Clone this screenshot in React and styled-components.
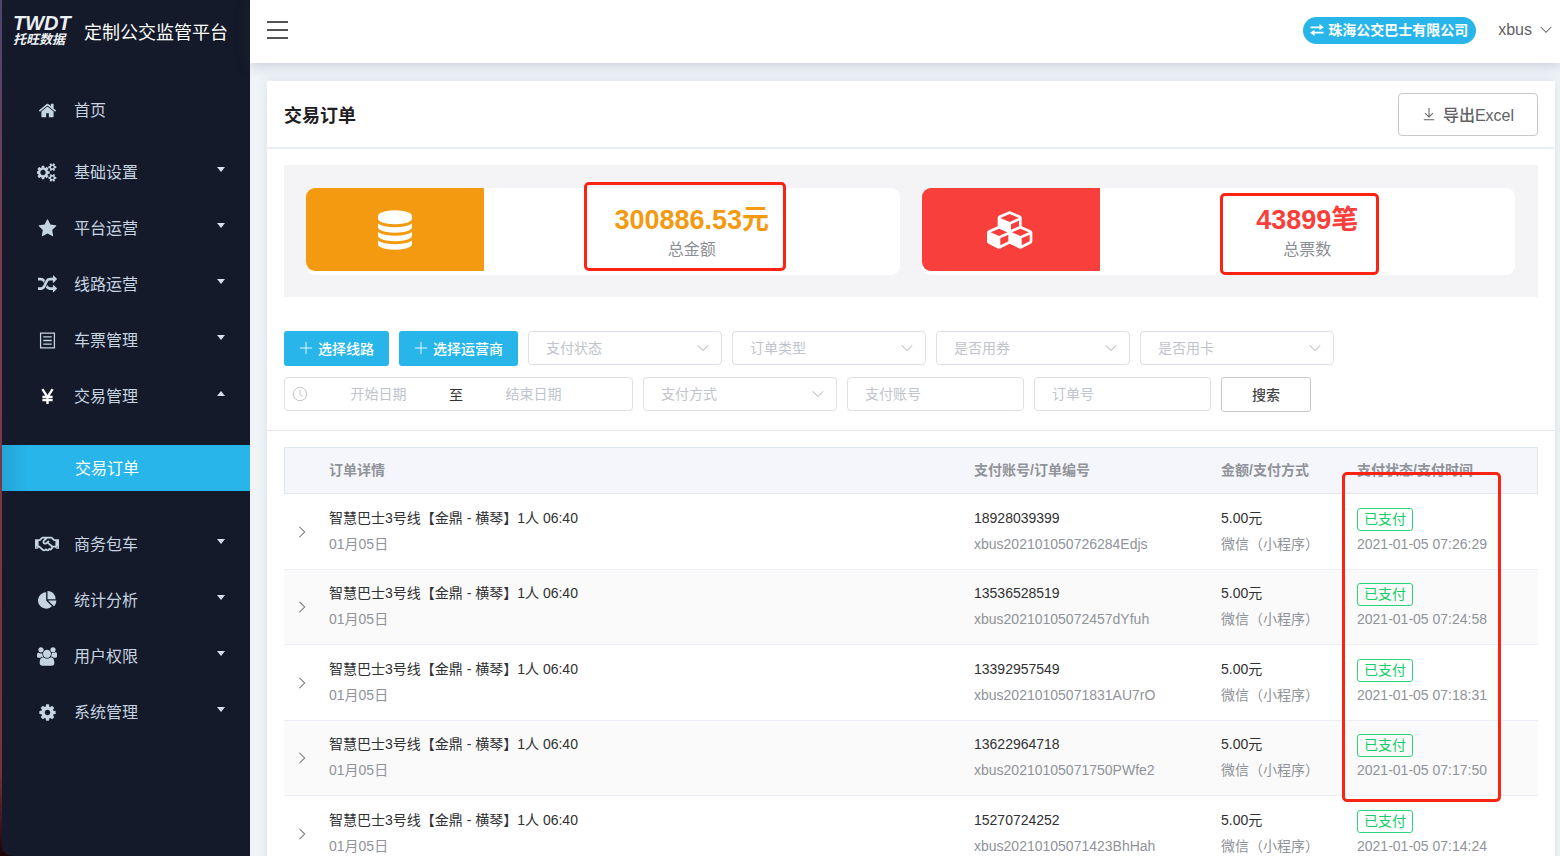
import React, { useState } from 'react';
import styled, { createGlobalStyle } from 'styled-components';
import { FaRegHandshake } from 'react-icons/fa';

const GlobalStyle = createGlobalStyle`
* {
  box-sizing: border-box;
}
body {
  margin: 0;
  background: #f0f4f8;
  color: #303133;
  font-family: "Liberation Sans", "Noto Sans CJK SC", sans-serif;
  font-size: 14px;
}
button, input, select {
  font-family: inherit;
  font-size: 14px;
}
`;

/* Shell */
const Shell = styled.div`
  display: flex;
  height: 100vh;
  overflow: hidden;
`;

const Sidebar = styled.aside`
  flex: none;
  width: 250px;
  padding-left: 2px;
  background: linear-gradient(#4d4470, #7b3c4c 30%, #7b3040 90%, #1a0508);
`;

const SidebarInner = styled.div`
  height: 100%;
  background: #141a29;
  border-bottom-left-radius: 10px;
  overflow: hidden;
`;

const Brand = styled.div`
  display: flex;
  align-items: center;
  gap: 12px;
  height: 63px;
  padding: 0 0 2px 11px;
  color: #fff;
`;

const Logo = styled.div`
  width: 59px;
  font-weight: bold;
  font-style: italic;
  white-space: nowrap;
  color: #eceff3;
`;

const LogoName = styled.div`
  font-size: 20px;
  line-height: 19px;
`;

const LogoSub = styled.div`
  font-size: 13px;
  line-height: 14px;
`;

const BrandTitle = styled.h1`
  margin: 0;
  font-size: 18px;
  font-weight: normal;
  white-space: nowrap;
`;

const Nav = styled.nav`
  padding-top: 19px;
`;

const NavItem = styled.button`
  display: flex;
  align-items: center;
  width: 100%;
  height: 56px;
  margin-bottom: ${(props) => (props.$spaced ? '6px' : '0')};
  padding: 0 25px 0 32px;
  border: none;
  background: none;
  color: #c6d3e1;
  font-size: 16px;
  text-align: left;
  cursor: pointer;
`;

const NavIcon = styled.span`
  display: flex;
  justify-content: center;
  width: 26px;
  margin-right: 14px;
  color: ${(props) => (props.$bright ? '#fff' : 'inherit')};
`;

const NavText = styled.span`
  flex: 1;
  padding-bottom: 2px;
`;

const Caret = styled.span`
  margin-bottom: 5px;
  border-left: 4px solid transparent;
  border-right: 4px solid transparent;
  border-top: ${(props) => (props.$open ? 'none' : '5px solid #d5dfe9')};
  border-bottom: ${(props) => (props.$open ? '5px solid #d5dfe9' : 'none')};
`;

const SubMenu = styled.div`
  padding: 21px 0 25px;
`;

const SubLink = styled.a`
  display: flex;
  align-items: center;
  height: 46px;
  padding: 0 0 2px 73px;
  background: linear-gradient(90deg, #22a5d6, #28b6ea 28px);
  color: #fff;
  font-size: 16px;
  text-decoration: none;
`;

/* Right side */
const Content = styled.div`
  flex: 1;
  min-width: 0;
  display: flex;
  flex-direction: column;
`;

const TopBar = styled.header`
  flex: none;
  display: flex;
  align-items: center;
  height: 63px;
  padding: 0 8px 3px 17px;
  background: #fff;
  box-shadow: 0 1px 14px rgba(40, 60, 80, 0.25);
  z-index: 1;
`;

const MenuButton = styled.button`
  display: flex;
  flex-direction: column;
  gap: 6px;
  width: 21px;
  margin-right: auto;
  padding: 0;
  border: none;
  background: none;
  cursor: pointer;

  span {
    height: 2px;
    background: #555;
  }
`;

const CompanyButton = styled.button`
  display: flex;
  align-items: center;
  gap: 4px;
  height: 27px;
  margin-right: 22px;
  padding: 0 8px 3px 7px;
  border: none;
  border-radius: 14px;
  background: #28b6ea;
  color: #fff;
  font-weight: bold;
  cursor: pointer;

  svg {
    margin-top: 2px;
  }
`;

const UserButton = styled.button`
  display: flex;
  align-items: center;
  gap: 8px;
  padding: 0;
  border: none;
  background: none;
  color: #5f6266;
  font-size: 16px;
  cursor: pointer;
`;

const Scroll = styled.main`
  flex: 1;
  overflow-y: auto;
  padding: 18px 5px 18px 17px;
  scrollbar-width: none;
`;

const Card = styled.section`
  background: #fff;
  box-shadow: 0 0 10px rgba(60, 90, 120, 0.12);
`;

const CardHead = styled.div`
  display: flex;
  align-items: center;
  justify-content: space-between;
  height: 68px;
  padding: 0 17px;
  border-bottom: 2px solid #ebeef5;
`;

const Title = styled.h2`
  margin: 0;
  color: #1f2023;
  font-size: 18px;
`;

const ExportButton = styled.button`
  display: flex;
  align-items: center;
  justify-content: center;
  gap: 7px;
  width: 140px;
  height: 43px;
  border: 1px solid #c8c9cc;
  border-radius: 4px;
  background: #fff;
  color: #606266;
  font-size: 16px;
  font-weight: 500;
  cursor: pointer;
`;

const Stats = styled.div`
  display: flex;
  gap: 22px;
  margin: 16px 17px 34px;
  padding: 23px 23px 22px 22px;
  background: #f4f4f7;
`;

const Stat = styled.div`
  flex: 1;
  display: flex;
  height: 87px;
  border-radius: 9px;
  background: #fff;
`;

const StatIcon = styled.div`
  display: flex;
  align-items: center;
  justify-content: center;
  width: 30%;
  height: 83px;
  border-radius: 9px 0 0 9px;
  background: ${(props) => props.$color};
  color: #fff;
`;

const StatBody = styled.div`
  position: relative;
  flex: 1;
  padding-top: 15px;
  text-align: center;
`;

const StatValue = styled.div`
  color: ${(props) => props.$color};
  font-size: 27px;
  font-weight: bold;
  line-height: 34px;
`;

const StatLabel = styled.div`
  color: #8a8d93;
  font-size: 16px;
  line-height: 26px;
`;

const Marker = styled.div`
  position: absolute;
  top: ${(props) => props.$top}px;
  left: ${(props) => (props.$left ? `${props.$left}px` : 'auto')};
  right: ${(props) => (props.$right ? `${props.$right}px` : 'auto')};
  width: ${(props) => props.$width}px;
  height: ${(props) => props.$height}px;
  border: 3px solid #fd2313;
  border-radius: 5px;
  pointer-events: none;
`;

const Filters = styled.form`
  display: flex;
  flex-direction: column;
  gap: 11px;
  padding: 0 17px 18px;
  border-bottom: 1px solid #e4e7ed;
`;

const FilterRow = styled.div`
  display: flex;
  gap: 10px;
  height: 35px;
`;

const PickButton = styled.button`
  display: flex;
  align-items: center;
  gap: 5px;
  height: 35px;
  padding: 0 15px 2px;
  border: none;
  border-radius: 3px;
  background: #28b6ea;
  color: #fff;
  font-weight: 500;
  white-space: nowrap;
  cursor: pointer;
`;

const SelectBox = styled.div`
  display: grid;
  align-items: center;
  width: 194px;
  height: 34px;

  select, svg {
    grid-area: 1 / 1;
  }
  svg {
    justify-self: end;
    margin-right: 12px;
    color: #c0c4cc;
    pointer-events: none;
  }
`;

const Select = styled.select`
  width: 100%;
  height: 34px;
  padding: 0 30px 0 17px;
  border: 1px solid #dcdfe6;
  border-radius: 4px;
  background: #fff;
  color: #c0c4cc;
  appearance: none;
`;

const TextInput = styled.input`
  width: 177px;
  height: 34px;
  padding: 0 17px;
  border: 1px solid #dcdfe6;
  border-radius: 4px;

  &::placeholder {
    color: #c0c4cc;
  }
`;

const DateRange = styled.div`
  display: flex;
  align-items: center;
  width: 349px;
  height: 34px;
  padding: 0 28px 0 7px;
  border: 1px solid #dcdfe6;
  border-radius: 4px;
  color: #303133;

  svg {
    color: #c0c4cc;
  }
`;

const DateInput = styled.input`
  flex: 1;
  min-width: 0;
  padding: 0;
  border: none;
  text-align: center;

  &::placeholder {
    color: #c0c4cc;
  }
`;

const SearchButton = styled.button`
  width: 90px;
  height: 35px;
  padding: 0 0 2px;
  border: 1px solid #c8c9cc;
  border-radius: 3px;
  background: #fff;
  color: #444649;
  font-weight: 500;
  cursor: pointer;
`;

const TableWrap = styled.div`
  position: relative;
  padding: 16px 17px;
`;

const Table = styled.table`
  width: 100%;
  table-layout: fixed;
  border-spacing: 0;

  th {
    height: 47px;
    padding: 0 10px 3px;
    border: solid #dfe6ec;
    border-width: 1px 0;
    background: #f4f6fb;
    color: #909399;
    text-align: left;
  }
  th:first-child {
    border-left-width: 1px;
  }
  th:last-child {
    border-right-width: 1px;
  }
  td {
    height: 76px;
    padding: 0 10px 2px;
    border-bottom: 1px solid #ebeef5;
    line-height: 26px;
    white-space: nowrap;
  }
  td:first-child {
    padding: 0 8px;
  }
  tr:nth-child(even) td {
    height: 75px;
    background: #fafafa;
  }
`;

const Col = styled.col`
  width: ${(props) => props.$width};
`;

const Minor = styled.div`
  color: #909399;
`;

const StatusLine = styled.div`
  display: flex;
  align-items: flex-end;
  height: 26px;
`;

const Tag = styled.span`
  height: 23px;
  padding: 0 6px;
  border: 1px solid #2bd67b;
  border-radius: 3px;
  color: #13ce66;
  line-height: 21px;
`;

const ExpandButton = styled.button`
  display: flex;
  padding: 0 3px;
  border: none;
  background: none;
  color: #6c6f75;
  cursor: pointer;
`;

const paths = {
  home: 'M1472 992v480q0 26-19 45t-45 19h-384v-384h-256v384h-384q-26 0-45-19t-19-45v-480q0-1 .5-3t.5-3l575-474 575 474q1 2 1 6zm223-69l-62 74q-8 9-21 11h-3q-13 0-21-7l-692-577-692 577q-12 8-24 7-13-2-21-11l-62-74q-8-10-7-23.5t11-21.5l719-599q32-26 76-26t76 26l244 204v-195q0-14 9-23t23-9h192q14 0 23 9t9 23v408l219 182q10 8 11 21.5t-7 23.5z',
  cogs: 'M832 896q0-106-75-181t-181-75-181 75-75 181 75 181 181 75 181-75 75-181zm768 512q0-52-38-90t-90-38-90 38-38 90q0 53 37.5 90.5t90.5 37.5 90.5-37.5 37.5-90.5zm0-1024q0-52-38-90t-90-38-90 38-38 90q0 53 37.5 90.5t90.5 37.5 90.5-37.5 37.5-90.5zm-384 421v185q0 10-7 19.5t-16 10.5l-155 24q-11 35-32 76 34 48 90 115 7 11 7 20 0 12-7 19-23 30-82.5 89.5t-78.5 59.5q-11 0-21-7l-115-90q-37 19-77 31-11 108-23 155-7 24-30 24h-186q-11 0-20-7.5t-10-17.5l-23-153q-34-10-75-31l-118 89q-7 7-20 7-11 0-21-8-144-133-144-160 0-9 7-19 10-14 41-53t47-61q-23-44-35-82l-152-24q-10-1-17-9.5t-7-19.5v-185q0-10 7-19.5t16-10.5l155-24q11-35 32-76-34-48-90-115-7-11-7-20 0-12 7-20 22-30 82-89t79-59q11 0 21 7l115 90q34-18 77-32 11-108 23-154 7-24 30-24h186q11 0 20 7.5t10 17.5l23 153q34 10 75 31l118-89q8-7 20-7 11 0 21 8 144 133 144 160 0 8-7 19-12 16-42 54t-45 60q23 48 34 82l152 23q10 2 17 10.5t7 19.5zm640 533v140q0 16-149 31-12 27-30 52 51 113 51 138 0 4-4 7-122 71-124 71-8 0-46-47t-52-68q-20 2-30 2t-30-2q-14 21-52 68t-46 47q-2 0-124-71-4-3-4-7 0-25 51-138-18-25-30-52-149-15-149-31v-140q0-16 149-31 13-29 30-52-51-113-51-138 0-4 4-7 4-2 35-20t59-34 30-16q8 0 46 46.5t52 67.5q20-2 30-2t30 2q51-71 92-112l6-2q4 0 124 70 4 3 4 7 0 25-51 138 17 23 30 52 149 15 149 31zm0-1024v140q0 16-149 31-12 27-30 52 51 113 51 138 0 4-4 7-122 71-124 71-8 0-46-47t-52-68q-20 2-30 2t-30-2q-14 21-52 68t-46 47q-2 0-124-71-4-3-4-7 0-25 51-138-18-25-30-52-149-15-149-31v-140q0-16 149-31 13-29 30-52-51-113-51-138 0-4 4-7 4-2 35-20t59-34 30-16q8 0 46 46.5t52 67.5q20-2 30-2t30 2q51-71 92-112l6-2q4 0 124 70 4 3 4 7 0 25-51 138 17 23 30 52 149 15 149 31z',
  star: 'M1728 647q0 22-26 48l-363 354 86 500q1 7 1 20 0 21-10.5 35.5t-30.5 14.5q-19 0-40-12l-449-236-449 236q-22 12-40 12-21 0-31.5-14.5t-10.5-35.5q0-6 2-20l86-500-364-354q-25-27-25-48 0-37 56-46l502-73 225-455q19-41 49-41t49 41l225 455 502 73q56 9 56 46z',
  random: 'M666 481q-60 92-137 273-22-45-37-72.5t-40.5-63.5-51-56.5-63-35-81.5-14.5h-224q-14 0-23-9t-9-23v-192q0-14 9-23t23-9h224q250 0 410 225zm1126 799q0 14-9 23l-320 320q-9 9-23 9-13 0-22.5-9.5t-9.5-22.5v-192q-32 0-85 .5t-81 1-73-1-71-5-64-10.5-63-18.5-58-28.5-59-40-55-53.5-56-69.5q59-93 136-273 22 45 37 72.5t40.5 63.5 51 56.5 63 35 81.5 14.5h256v-192q0-14 9-23t23-9q12 0 24 10l319 319q9 9 9 23zm0-896q0 14-9 23l-320 320q-9 9-23 9-13 0-22.5-9.5t-9.5-22.5v-192h-256q-48 0-87 15t-69 45-51 61.5-45 77.5q-32 62-78 171-29 66-49.5 111t-54 105-64 100-74 83-90 68.5-106.5 42-128 16.5h-224q-14 0-23-9t-9-23v-192q0-14 9-23t23-9h224q48 0 87-15t69-45 51-61.5 45-77.5q32-62 78-171 29-66 49.5-111t54-105 64-100 74-83 90-68.5 106.5-42 128-16.5h256v-192q0-14 9-23t23-9q12 0 24 10l319 319q9 9 9 23z',
  pie: 'M768 890l546 546q-106 108-247.5 168t-298.5 60q-209 0-385.5-103t-279.5-279.5-103-385.5 103-385.5 279.5-279.5 385.5-103v762zm187 6h773q0 157-60 298.5t-168 247.5zm709-128h-768v-768q209 0 385.5 103t279.5 279.5 103 385.5z',
  users: 'M593 896q-162 5-265 128h-134q-82 0-138-40.5t-56-118.5q0-353 124-353 6 0 43.5 21t97.5 42.5 119 21.5q67 0 133-23-5 37-5 66 0 159 92 293zm1071 637q0 120-73 189.5t-194 69.5h-874q-121 0-194-69.5t-73-189.5q0-53 3.5-103.5t14-109 26.5-108.5 43-97.5 62-81 85.5-53.5 111.5-20q10 0 43 21.5t73 48 107 48 135 21.5 135-21.5 107-48 73-48 43-21.5q61 0 111.5 20t85.5 53.5 62 81 43 97.5 26.5 108.5 14 109 3.5 103.5zm-1024-1277q0 106-75 181t-181 75-181-75-75-181 75-181 181-75 181 75 75 181zm704 384q0 159-112.5 271.5t-271.5 112.5-271.5-112.5-112.5-271.5 112.5-271.5 271.5-112.5 271.5 112.5 112.5 271.5zm576 225q0 78-56 118.5t-138 40.5h-134q-103-123-265-128 92-134 92-293 0-29-5-66 66 23 133 23 59 0 119-21.5t97.5-42.5 43.5-21q124 0 124 353zm-128-609q0 106-75 181t-181 75-181-75-75-181 75-181 181-75 181 75 75 181z',
  cog: 'M1152 896q0-106-75-181t-181-75-181 75-75 181 75 181 181 75 181-75 75-181zm512-109v222q0 12-8 23t-20 13l-185 28q-19 54-39 91 35 50 107 138 10 12 10 25t-9 23q-27 37-99 108t-94 71q-12 0-26-9l-138-108q-44 23-91 38-16 136-29 186-7 28-36 28h-222q-14 0-24.5-8.5t-11.5-21.5l-28-184q-49-16-90-37l-141 107q-10 9-25 9-14 0-25-11-126-114-165-168-7-10-7-23 0-12 8-23 15-21 51-66.5t54-70.5q-27-50-41-99l-183-27q-13-2-21-12.5t-8-23.5v-222q0-12 8-23t19-13l186-28q14-46 39-92-40-57-107-138-10-12-10-24 0-10 9-23 26-36 98.5-107.5t94.5-71.5q13 0 26 10l138 107q44-23 91-38 16-136 29-186 7-28 36-28h222q14 0 24.5 8.5t11.5 21.5l28 184q49 16 90 37l142-107q9-9 24-9 13 0 25 10 129 119 165 170 7 8 7 22 0 12-8 23-15 21-51 66.5t-54 70.5q26 50 41 98l183 28q13 2 21 12.5t8 23.5z',
  database: 'M768 768q237 0 443-43t325-127v170q0 69-103 128t-280 93.5-385 34.5-385-34.5-280-93.5-103-128v-170q119 84 325 127t443 43zm0 768q237 0 443-43t325-127v170q0 69-103 128t-280 93.5-385 34.5-385-34.5-280-93.5-103-128v-170q119 84 325 127t443 43zm0-384q237 0 443-43t325-127v170q0 69-103 128t-280 93.5-385 34.5-385-34.5-280-93.5-103-128v-170q119 84 325 127t443 43zm0-1152q208 0 385 34.5t280 93.5 103 128v128q0 69-103 128t-280 93.5-385 34.5-385-34.5-280-93.5-103-128v-128q0-69 103-128t280-93.5 385-34.5z',
  cubes: 'M640 1632l384-192v-314l-384 164v342zm-64-454l404-173-404-173-404 173zm1088 454l384-192v-314l-384 164v342zm-64-454l404-173-404-173-404 173zm-448-293l384-165v-266l-384 164v267zm-64-379l441-189-441-189-441 189zm1088 518v416q0 36-19 67t-52 47l-448 224q-25 14-57 14t-57-14l-448-224q-4-2-7-4-2 2-7 4l-448 224q-25 14-57 14t-57-14l-448-224q-33-16-52-47t-19-67v-416q0-38 21.5-70t56.5-48l434-186v-400q0-38 21.5-70t56.5-48l448-192q23-10 50-10t50 10l448 192q35 16 56.5 48t21.5 70v400l434 186q36 16 57 48t21 70z',
};

const Glyph = ({ name, box = 1792, width = 19, height = 19 }) => (
  <svg viewBox={`0 0 ${box} 1792`} width={width} height={height} fill="currentColor" aria-hidden="true">
    <path d={paths[name]} />
  </svg>
);

const Line = ({ d, size = 14, stroke = 1, children }) => (
  <svg viewBox="0 0 16 16" width={size} height={size} fill="none" stroke="currentColor" strokeWidth={stroke} aria-hidden="true">
    <path d={d} />
    {children}
  </svg>
);

const chevronDown = 'M2 5l6 6 6-6';
const plus = 'M8 1v14M1 8h14';

const TicketIcon = () => <Line size={17} stroke={1.2} d="M1.5 1h13v14h-13zM4 4.5h8M4 8h8M4 11.5h8" />;
const YenIcon = () => <Line size={17} stroke={2.2} d="M3.2 1L8 8.5 12.8 1M8 8v7M3.2 8.3h9.6M3.2 11.3h9.6" />;

const SwapIcon = () => (
  <svg viewBox="0 0 14 12" width="14" height="12" fill="currentColor" aria-hidden="true">
    <path d="M0.5 2.4h9V0L13.8 3.3 9.5 6.2V4.2h-9zM13.5 9.6h-9V12L0.2 8.7 4.5 5.8v2h9z" />
  </svg>
);

const menu = [
  { text: '首页', icon: <Glyph name="home" />, leaf: true },
  { text: '基础设置', icon: <Glyph name="cogs" box={1920} width={20} /> },
  { text: '平台运营', icon: <Glyph name="star" /> },
  { text: '线路运营', icon: <Glyph name="random" /> },
  { text: '车票管理', icon: <TicketIcon /> },
  { text: '交易管理', icon: <YenIcon />, children: ['交易订单'] },
  { text: '商务包车', icon: <FaRegHandshake size={24} /> },
  { text: '统计分析', icon: <Glyph name="pie" /> },
  { text: '用户权限', icon: <Glyph name="users" box={1920} width={20} /> },
  { text: '系统管理', icon: <Glyph name="cog" /> },
];

const orders = [
  { phone: '18928039399', no: 'xbus202101050726284Edjs', time: '2021-01-05 07:26:29' },
  { phone: '13536528519', no: 'xbus20210105072457dYfuh', time: '2021-01-05 07:24:58' },
  { phone: '13392957549', no: 'xbus20210105071831AU7rO', time: '2021-01-05 07:18:31' },
  { phone: '13622964718', no: 'xbus20210105071750PWfe2', time: '2021-01-05 07:17:50' },
  { phone: '15270724252', no: 'xbus20210105071423BhHah', time: '2021-01-05 07:14:24' },
];

const FilterSelect = ({ label }) => (
  <SelectBox>
    <Select aria-label={label} defaultValue="">
      <option value="">{label}</option>
    </Select>
    <Line size={14} stroke={1.2} d={chevronDown} />
  </SelectBox>
);

const SideMenu = () => {
  const [open, setOpen] = useState('交易管理');

  return (
    <Nav>
      {menu.map((item) => (
        <React.Fragment key={item.text}>
          <NavItem $spaced={item.leaf} onClick={() => setOpen(open === item.text ? '' : item.text)}>
            <NavIcon $bright={Boolean(item.children)}>{item.icon}</NavIcon>
            <NavText>{item.text}</NavText>
            {!item.leaf && <Caret $open={open === item.text} />}
          </NavItem>
          {item.children && open === item.text && (
            <SubMenu>
              {item.children.map((child) => (
                <SubLink key={child} href="#orders">{child}</SubLink>
              ))}
            </SubMenu>
          )}
        </React.Fragment>
      ))}
    </Nav>
  );
};

const OrderTable = () => (
  <TableWrap>
    <Table>
      <colgroup>
        <Col $width="35px" />
        <Col $width="auto" />
        <Col $width="247px" />
        <Col $width="136px" />
        <Col $width="191px" />
      </colgroup>
      <thead>
        <tr>
          <th />
          <th>订单详情</th>
          <th>支付账号/订单编号</th>
          <th>金额/支付方式</th>
          <th>支付状态/支付时间</th>
        </tr>
      </thead>
      <tbody>
        {orders.map((order) => (
          <tr key={order.no}>
            <td>
              <ExpandButton aria-label="展开">
                <Line size={14} stroke={1.2} d="M5 2l6 6-6 6" />
              </ExpandButton>
            </td>
            <td>
              <div>智慧巴士3号线【金鼎 - 横琴】1人 06:40</div>
              <Minor>01月05日</Minor>
            </td>
            <td>
              <div>{order.phone}</div>
              <Minor>{order.no}</Minor>
            </td>
            <td>
              <div>5.00元</div>
              <Minor>微信（小程序）</Minor>
            </td>
            <td>
              <StatusLine><Tag>已支付</Tag></StatusLine>
              <Minor>{order.time}</Minor>
            </td>
          </tr>
        ))}
      </tbody>
    </Table>
    <Marker $top={41} $right={54} $width={159} $height={330} />
  </TableWrap>
);

const App = () => {
  return (
    <Shell>
      <GlobalStyle />
      <Sidebar>
        <SidebarInner>
          <Brand>
            <Logo>
              <LogoName>TWDT</LogoName>
              <LogoSub>托旺数据</LogoSub>
            </Logo>
            <BrandTitle>定制公交监管平台</BrandTitle>
          </Brand>
          <SideMenu />
        </SidebarInner>
      </Sidebar>
      <Content>
        <TopBar>
          <MenuButton aria-label="菜单">
            <span />
            <span />
            <span />
          </MenuButton>
          <CompanyButton>
            <SwapIcon />
            珠海公交巴士有限公司
          </CompanyButton>
          <UserButton>
            xbus
            <Line size={12} stroke={1.4} d="M1 4l7 7 7-7" />
          </UserButton>
        </TopBar>
        <Scroll>
          <Card>
            <CardHead>
              <Title>交易订单</Title>
              <ExportButton>
                <Line size={14} stroke={1.2} d="M8 1v10M3.5 7L8 11.5 12.5 7M2 14.5h12" />
                导出Excel
              </ExportButton>
            </CardHead>
            <Stats>
              <Stat>
                <StatIcon $color="#f39a11">
                  <Glyph name="database" box={1536} width={34} height={40} />
                </StatIcon>
                <StatBody>
                  <StatValue $color="#f39a11">300886.53元</StatValue>
                  <StatLabel>总金额</StatLabel>
                  <Marker $top={-6} $left={100} $width={202} $height={89} />
                </StatBody>
              </Stat>
              <Stat>
                <StatIcon $color="#f93f3b">
                  <Glyph name="cubes" box={2304} width={48} height={40} />
                </StatIcon>
                <StatBody>
                  <StatValue $color="#f93f3b">43899笔</StatValue>
                  <StatLabel>总票数</StatLabel>
                  <Marker $top={5} $left={120} $width={159} $height={82} />
                </StatBody>
              </Stat>
            </Stats>
            <Filters onSubmit={(e) => e.preventDefault()}>
              <FilterRow>
                <PickButton type="button"><Line size={14} d={plus} />选择线路</PickButton>
                <PickButton type="button"><Line size={14} d={plus} />选择运营商</PickButton>
                <FilterSelect label="支付状态" />
                <FilterSelect label="订单类型" />
                <FilterSelect label="是否用券" />
                <FilterSelect label="是否用卡" />
              </FilterRow>
              <FilterRow>
                <DateRange>
                  <Line size={16} stroke={1} d="M8 3.5v5l3 2">
                    <circle cx="8" cy="8" r="6.7" />
                  </Line>
                  <DateInput aria-label="开始日期" placeholder="开始日期" />
                  至
                  <DateInput aria-label="结束日期" placeholder="结束日期" />
                </DateRange>
                <FilterSelect label="支付方式" />
                <TextInput aria-label="支付账号" placeholder="支付账号" />
                <TextInput aria-label="订单号" placeholder="订单号" />
                <SearchButton>搜索</SearchButton>
              </FilterRow>
            </Filters>
            <OrderTable />
          </Card>
        </Scroll>
      </Content>
    </Shell>
  );
};

export default App;
